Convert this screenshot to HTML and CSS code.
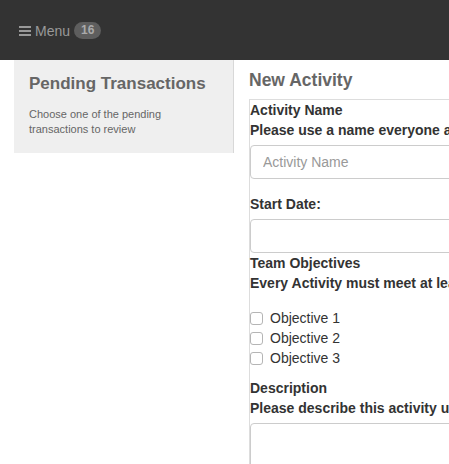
FILE: index.html
```html
<!DOCTYPE html>
<html>
<head>
<meta charset="utf-8">
<link rel="stylesheet" href="styles.css">
</head>
<body>
<header class="topbar">
  <span class="menu">
    <svg class="burger" width="12" height="10" viewBox="0 0 12 10"><rect x="0" y="0" width="12" height="2" fill="#999"/><rect x="0" y="4" width="12" height="2" fill="#999"/><rect x="0" y="8" width="12" height="2" fill="#999"/></svg>
    <span class="menu-label">Menu</span>
    <span class="badge">16</span>
  </span>
</header>
<div class="layout">
  <aside class="sidebar">
    <h2 class="side-title">Pending Transactions</h2>
    <p class="side-text">Choose one of the pending transactions to review</p>
  </aside>
  <main class="main">
    <h1 class="page-title">New Activity</h1>
    <form class="form-box">
      <div class="group">
        <div class="label">Activity Name</div>
        <div class="label">Please use a name everyone at the company will understand</div>
        <input class="field" type="text" placeholder="Activity Name">
      </div>
      <div class="group">
        <div class="label">Start Date:</div>
        <input class="field" type="text">
      </div>
      <div class="group-tight">
        <div class="label">Team Objectives</div>
        <div class="label">Every Activity must meet at least one team objective</div>
        <div class="checks">
          <label class="check"><input type="checkbox" class="box"><span>Objective 1</span></label>
          <label class="check"><input type="checkbox" class="box"><span>Objective 2</span></label>
          <label class="check"><input type="checkbox" class="box"><span>Objective 3</span></label>
        </div>
      </div>
      <div class="group-tight">
        <div class="label">Description</div>
        <div class="label">Please describe this activity using complete sentences</div>
        <textarea class="area"></textarea>
      </div>
    </form>
  </main>
</div>
</body>
</html>
```
FILE: styles.css
```css
html, body {
  margin: 0;
  padding: 0;
  overflow: hidden;
  background: #fff;
  font-family: "Liberation Sans", Arial, Helvetica, sans-serif;
  color: #333;
}
.topbar {
  height: 60px;
  background: #333;
  display: flex;
  align-items: center;
  padding-left: 19px;
  box-sizing: border-box;
}
.menu {
  display: flex;
  align-items: center;
  margin-top: 1px;
}
.burger { display: block; margin-right: 4px; }
.menu-label {
  color: #999;
  font-size: 14px;
  line-height: 20px;
  margin-right: 4px;
}
.badge {
  display: inline-block;
  background: #5e5e5e;
  color: #aaa;
  font-size: 12px;
  font-weight: bold;
  line-height: 17px;
  height: 17px;
  padding: 0 7px;
  border-radius: 9px;
}
.layout {
  display: flex;
  align-items: flex-start;
  width: 900px;
}
.sidebar {
  margin-left: 14px;
  flex: none;
  background: #efefef;
  border-right: 1px solid #d8d8d8;
  padding: 14px 15px 16px 15px;
  box-sizing: border-box;
  width: 220px;
}
.side-title {
  margin: 0;
  font-size: 17px;
  line-height: 20px;
  font-weight: bold;
  color: #666;
}
.side-text {
  margin: 13px 0 0;
  font-size: 11px;
  line-height: 15px;
  color: #666;
}
.main {
  margin-left: 15px;
  width: 640px;
  flex: none;
}
.page-title {
  margin: 10px 0 9px;
  font-size: 17.5px;
  line-height: 20px;
  font-weight: bold;
  color: #666;
}
.form-box {
  border-top: 1px solid #ddd;
  border-left: 1px solid #ddd;
  padding: 0 0 40px 0;
}
.label {
  font-size: 14px;
  font-weight: bold;
  line-height: 20px;
  color: #333;
  white-space: nowrap;
}
.group { margin-bottom: 15px; }
.group:nth-child(2) { margin-bottom: 0; }
.field {
  display: block;
  margin-top: 5px;
  width: 100%;
  height: 34px;
  box-sizing: border-box;
  border: 1px solid #ccc;
  border-radius: 4px;
  padding: 6px 12px;
  font-family: "Liberation Sans", Arial, Helvetica, sans-serif;
  font-size: 14px;
  color: #555;
  background: #fff;
  outline: none;
}
.field::placeholder { color: #999; }
.checks {
  margin: 15px 0 10px;
  display: flex;
  flex-direction: column;
}
.check {
  display: flex;
  align-items: center;
  height: 20px;
  font-size: 14px;
  line-height: 20px;
  color: #333;
}
.box {
  appearance: none;
  -webkit-appearance: none;
  width: 13px;
  height: 13px;
  margin: 1px 7px 0 0;
  border: 1px solid #b5b5b5;
  border-radius: 3px;
  background: #fff;
  box-sizing: border-box;
}
.area {
  display: block;
  margin-top: 5px;
  width: 100%;
  height: 80px;
  box-sizing: border-box;
  border: 1px solid #ccc;
  border-radius: 4px;
  resize: none;
  outline: none;
}
```
